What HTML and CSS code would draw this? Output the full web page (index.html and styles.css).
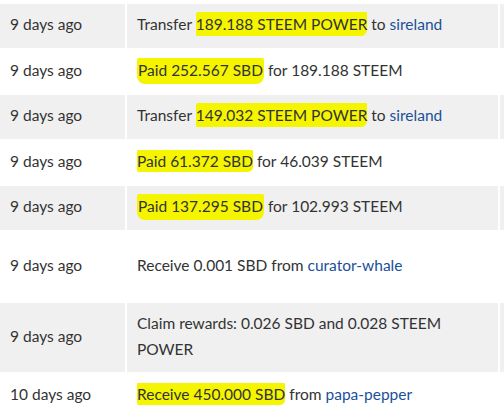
FILE: index.html
```html
<!DOCTYPE html>
<html>
<head>
<meta charset="utf-8">
<link rel="stylesheet" href="styles.css">
</head>
<body>
<table class="history">
  <colgroup><col class="c-date"><col class="c-op"><col class="c-memo"></colgroup>
  <tbody>
    <tr class="alt"><td>9 days ago</td><td>Transfer <span class="hl hl-a">189.188 STEEM POWER</span> to <a href="#">sireland</a></td><td></td></tr>
    <tr><td>9 days ago</td><td><span class="hl hl-b">Paid 252.567 SBD</span> for 189.188 STEEM</td><td></td></tr>
    <tr class="alt"><td>9 days ago</td><td>Transfer <span class="hl hl-a">149.032 STEEM POWER</span> to <a href="#">sireland</a></td><td></td></tr>
    <tr><td>9 days ago</td><td><span class="hl hl-c">Paid 61.372 SBD</span> for 46.039 STEEM</td><td></td></tr>
    <tr class="alt"><td>9 days ago</td><td><span class="hl hl-b">Paid 137.295 SBD</span> for 102.993 STEEM</td><td></td></tr>
    <tr><td>9 days ago</td><td>Receive 0.001 SBD from <a href="#">curator-whale</a></td><td>&nbsp;<br>&nbsp;</td></tr>
    <tr class="alt"><td>9 days ago</td><td>Claim rewards: 0.026 SBD and 0.028 STEEM POWER</td><td></td></tr>
    <tr><td>10 days ago</td><td><span class="hl hl-c">Receive 450.000 SBD</span> from <a href="#">papa-pepper</a></td><td></td></tr>
    <tr class="alt"><td></td><td></td><td></td></tr>
  </tbody>
</table>
</body>
</html>
```

FILE: styles.css
```css
html, body {
  margin: 0;
  padding: 0;
  background: #fff;
  overflow: hidden;
}

body {
  font-family: Lato, "Open Sans", sans-serif;
  font-size: 15.5px;
  color: #333;
}

.history {
  border-collapse: separate;
  border-spacing: 2px;
  table-layout: fixed;
  width: 704px;
  margin: 2px 0 0 -2px;
}

.c-date { width: 125px; }
.c-op { width: 371px; }
.c-memo { width: 200px; }

.history td {
  padding: 8px 10px 10px;
  line-height: 25.6px;
  height: 25.6px;
  vertical-align: middle;
  background: #fff;
}

.history tr.alt td {
  background: #f0f0f0;
}

.history a {
  color: #1a5099;
  text-decoration: none;
}

.hl {
  background: #f5f500;
  padding: 3px 0 3px;
}

.hl-a {
  border-radius: 2px 1px 6px 1px;
}

.hl-b {
  padding: 3px 1px 5px;
  border-radius: 2px 2px 8px 8px;
}

.hl-c {
  padding: 2px 0 2px;
  border-radius: 1px 1px 5px 2px;
}
```
